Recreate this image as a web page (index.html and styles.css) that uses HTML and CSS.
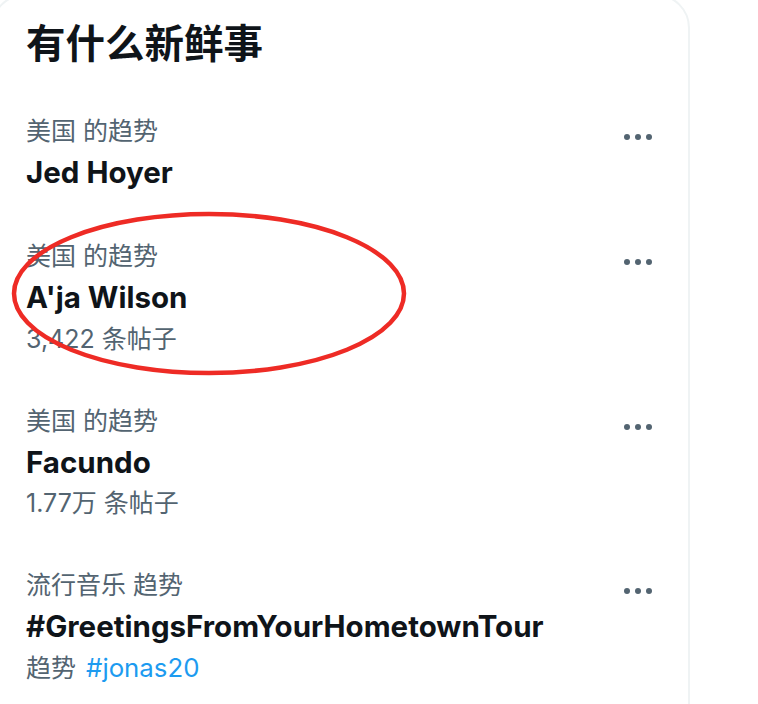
FILE: index.html
```html
<!DOCTYPE html>
<html lang="zh-CN">
<head>
<meta charset="utf-8">
<title>有什么新鲜事</title>
<link rel="stylesheet" href="styles.css">
</head>
<body>
<section class="panel">
  <h2 class="title">有什么新鲜事</h2>
  <div class="trend">
    <div class="trend-body">
      <div class="meta">美国 的趋势</div>
      <div class="name">Jed Hoyer</div>
    </div>
    <div class="more"><span></span><span></span><span></span></div>
  </div>
  <div class="trend">
    <div class="trend-body">
      <div class="meta">美国 的趋势</div>
      <div class="name">A'ja Wilson</div>
      <div class="count">3,422 条帖子</div>
    </div>
    <div class="more"><span></span><span></span><span></span></div>
  </div>
  <div class="trend">
    <div class="trend-body">
      <div class="meta">美国 的趋势</div>
      <div class="name">Facundo</div>
      <div class="count">1.77万 条帖子</div>
    </div>
    <div class="more"><span></span><span></span><span></span></div>
  </div>
  <div class="trend">
    <div class="trend-body">
      <div class="meta">流行音乐 趋势</div>
      <div class="name">#GreetingsFromYourHometownTour</div>
      <div class="count">趋势 <a class="tag" href="#">#jonas20</a></div>
    </div>
    <div class="more"><span></span><span></span><span></span></div>
  </div>
</section>
<svg class="annotation" width="758" height="704" viewBox="0 0 758 704" aria-hidden="true">
  <ellipse cx="209" cy="293.5" rx="195" ry="79.5" fill="none" stroke="#ee2b25" stroke-width="4.5"/>
</svg>
</body>
</html>
```
FILE: styles.css
```css
html, body {
  margin: 0;
  padding: 0;
  background: #ffffff;
  overflow: hidden;
}

body {
  width: 758px;
  height: 704px;
  position: relative;
  font-family: "Inter", "Noto Sans CJK SC", sans-serif;
  color: #0f1419;
}

.panel {
  box-sizing: border-box;
  width: 699px;
  min-height: 800px;
  margin: -6px 0 0 -9px;
  border: 2px solid #eff3f4;
  border-radius: 34px;
  padding: 25px 36px 0 33px;
}

.title {
  margin: 0 0 23px 0;
  font-size: 39.5px;
  line-height: 47px;
  font-weight: 700;
  color: #0f1419;
}

.trend {
  display: flex;
  justify-content: space-between;
  align-items: flex-start;
  padding: 24px 0 26px 0;
}

.trend-body {
  display: flex;
  flex-direction: column;
}

.meta,
.count {
  font-size: 25px;
  line-height: 32px;
  color: #536471;
}

.name {
  margin-top: 7px;
  font-size: 29.5px;
  line-height: 36px;
  font-weight: 700;
  color: #0f1419;
}

.count {
  margin-top: 7.5px;
}

.tag {
  margin-left: 3px;
  font-size: 25.8px;
  color: #1d9bf0;
  text-decoration: none;
}

.more {
  display: flex;
  gap: 5px;
  margin-top: 19px;
}

.more span {
  width: 6px;
  height: 6px;
  border-radius: 50%;
  background: #536471;
}

.annotation {
  position: absolute;
  top: 0;
  left: 0;
  pointer-events: none;
}
```
